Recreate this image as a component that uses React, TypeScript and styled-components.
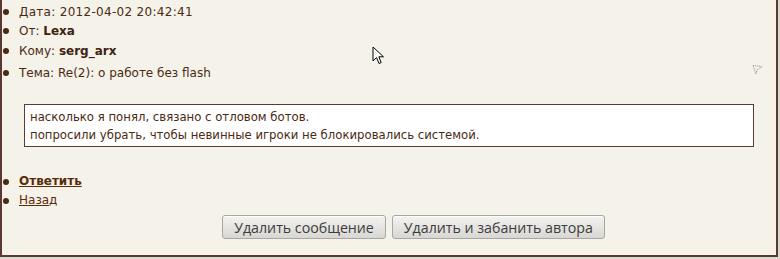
import React from "react";
import styled, { createGlobalStyle } from "styled-components";

const GlobalStyle = createGlobalStyle`
    html, body {
        margin: 0;
        padding: 0;
        background: #dcd8cf;
    }
`;

const Panel = styled.div`
    position: relative;
    width: 774px;
    height: 255px;
    background: #f5f2ea;
    border-left: 2px solid #5b3a33;
    border-right: 2px solid #5b3a33;
    border-bottom: 2px solid #5b3a33;
    font-family: "DejaVu Sans", Verdana, sans-serif;
    font-size: 12px;
    color: #4a2a12;
`;

const List = styled.ul`
    list-style: none;
    margin: 0;
    padding: 2px 0 0 0;
`;

const Item = styled.li<{ $gap?: number; $spacing?: number }>`
    position: relative;
    height: 20px;
    line-height: 20px;
    padding-left: 17px;
    margin-top: ${(p) => p.$gap ?? 0}px;
    letter-spacing: ${(p) => p.$spacing ?? 0}px;
    &::before {
        content: "";
        position: absolute;
        left: 1px;
        top: 7px;
        width: 6px;
        height: 6px;
        border-radius: 50%;
        background: #4a2a12;
    }
`;

const Strong = styled.b`
    color: #3e2310;
`;

const Flag = styled.svg`
    position: absolute;
    right: 13px;
    top: 64px;
`;

const Cursor = styled.svg`
    position: absolute;
    left: 370px;
    top: 46px;
`;

const Message = styled.div`
    margin: 21px 0 0 22px;
    width: 718px;
    padding: 3px 5px 2px;
    background: #fff;
    border: 1px solid #5b3a33;
    font-size: 11.7px;
    line-height: 18px;
    color: #4a2a12;
`;

const Links = styled(List)`
    margin-top: 25px;
    padding: 0;
`;

const LinkItem = styled(Item)`
    height: 19px;
    line-height: 19px;
`;

const Anchor = styled.a<{ $bold?: boolean }>`
    color: #5a2c08;
    text-decoration: underline;
    font-weight: ${(p) => (p.$bold ? "bold" : "normal")};
    cursor: pointer;
`;

const Buttons = styled.div`
    display: flex;
    justify-content: center;
    gap: 6px;
    margin-top: 5px;
    padding-left: 49px;
`;

const Button = styled.button`
    height: 24px;
    padding: 0 11px;
    font-family: "Open Sans", "DejaVu Sans", sans-serif;
    font-size: 14.2px;
    color: #3c3c3c;
    background: linear-gradient(#f4f3f1, #d9d7d3);
    border: 1px solid #a8a6a2;
    border-radius: 3px;
    box-shadow: inset 0 1px 0 #fff;
    cursor: pointer;
`;

export default function App() {
    return (
        <>
            <GlobalStyle />
            <Panel>
                <List>
                    <Item $spacing={0.3}>Дата: 2012-04-02 20:42:41</Item>
                    <Item $gap={-1}>
                        От: <Strong>Lexa</Strong>
                    </Item>
                    <Item>
                        Кому: <Strong>serg_arx</Strong>
                    </Item>
                    <Item $gap={2}>Тема: Re(2): о работе без flash</Item>
                </List>
                <Flag width="11" height="11" viewBox="0 0 11 11">
                    <path
                        d="M1 1.5 L10 2.5 L5 6 L4 10 Z"
                        fill="none"
                        stroke="#9a9a9a"
                        strokeWidth="1"
                        strokeDasharray="1.2 0.8"
                    />
                </Flag>
                <Cursor width="14" height="20" viewBox="0 0 14 20">
                    <path
                        d="M1 1 L1 15 L4.5 11.5 L7 17.5 L9.2 16.5 L6.8 10.8 L11.5 10.8 Z"
                        fill="#fff"
                        stroke="#000"
                        strokeWidth="1"
                        strokeLinejoin="round"
                    />
                </Cursor>
                <Message>
                    насколько я понял, связано с отловом ботов.
                    <br />
                    попросили убрать, чтобы невинные игроки не блокировались системой.
                </Message>
                <Links>
                    <LinkItem>
                        <Anchor $bold>Ответить</Anchor>
                    </LinkItem>
                    <LinkItem>
                        <Anchor>Назад</Anchor>
                    </LinkItem>
                </Links>
                <Buttons>
                    <Button>Удалить сообщение</Button>
                    <Button>Удалить и забанить автора</Button>
                </Buttons>
            </Panel>
        </>
    );
}
